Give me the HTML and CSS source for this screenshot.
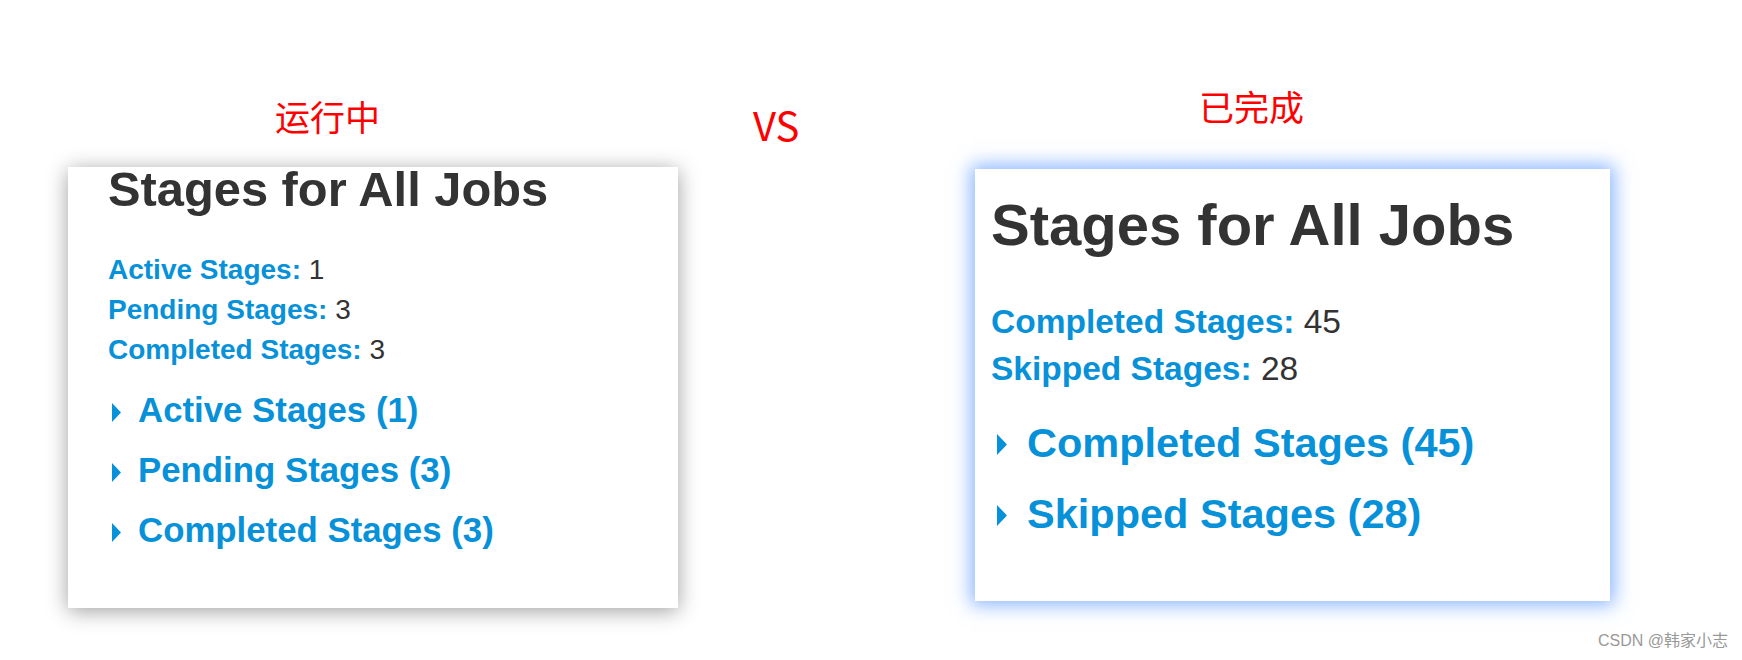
FILE: index.html
```html
<!DOCTYPE html>
<html lang="en">
<head>
    <meta charset="UTF-8">
    <title>Stages for All Jobs - 运行中 vs 已完成</title>
    <link rel="stylesheet" href="styles.css">
</head>
<body>
    <div class="page">
        <!-- 运行中 -->
        <div class="side side-running">
            <div class="label">运行中</div>
            <div class="panel panel-running">
                <h3 class="title">Stages for All Jobs</h3>
                <ul class="stats">
                    <li><a class="stat-name">Active Stages:</a> 1</li>
                    <li><a class="stat-name">Pending Stages:</a> 3</li>
                    <li><a class="stat-name">Completed Stages:</a> 3</li>
                </ul>
                <div class="sections">
                    <h4 class="section">
                        <svg class="arrow" viewBox="0 0 9 19"><polygon points="0,0 9,9.5 0,19"/></svg>
                        <a>Active Stages (1)</a>
                    </h4>
                    <h4 class="section">
                        <svg class="arrow" viewBox="0 0 9 19"><polygon points="0,0 9,9.5 0,19"/></svg>
                        <a>Pending Stages (3)</a>
                    </h4>
                    <h4 class="section">
                        <svg class="arrow" viewBox="0 0 9 19"><polygon points="0,0 9,9.5 0,19"/></svg>
                        <a>Completed Stages (3)</a>
                    </h4>
                </div>
            </div>
        </div>

        <div class="vs">VS</div>

        <!-- 已完成 -->
        <div class="side side-done">
            <div class="label">已完成</div>
            <div class="panel panel-done">
                <h3 class="title">Stages for All Jobs</h3>
                <ul class="stats">
                    <li><a class="stat-name">Completed Stages:</a> 45</li>
                    <li><a class="stat-name">Skipped Stages:</a> 28</li>
                </ul>
                <div class="sections">
                    <h4 class="section">
                        <svg class="arrow" viewBox="0 0 10 21"><polygon points="0,0 10,10.5 0,21"/></svg>
                        <a>Completed Stages (45)</a>
                    </h4>
                    <h4 class="section">
                        <svg class="arrow" viewBox="0 0 10 21"><polygon points="0,0 10,10.5 0,21"/></svg>
                        <a>Skipped Stages (28)</a>
                    </h4>
                </div>
            </div>
        </div>

        <div class="credit">CSDN @韩家小志</div>
    </div>
</body>
</html>
```

FILE: styles.css
```css
*{
    padding: 0;
    margin: 0;
}
body {
    background-color: #fff;
    font-family: "Liberation Sans", Arial, "Noto Sans CJK SC", sans-serif;
}
.page {
    position: relative;
    width: 1742px;
    height: 660px;
    overflow: hidden;
    display: flex;
    align-items: flex-start;
}
.label {
    font-family: "Noto Sans CJK SC", sans-serif;
    font-size: 35px;
    line-height: 40px;
    color: #ff0000;
}
.vs {
    box-sizing: border-box;
    width: 297px;
    padding-left: 75px;
    margin-top: 100px;
    font-family: "Noto Sans CJK SC", sans-serif;
    font-size: 40px;
    line-height: 48px;
    color: #ff0000;
}
.panel {
    background-color: #fff;
    color: #333;
}
.title {
    font-weight: bold;
    color: #333;
}
.stats {
    list-style: none;
}
.stat-name,
.section a {
    color: #0791d9;
    font-weight: bold;
}
.section {
    display: flex;
    align-items: center;
    font-weight: bold;
}
.arrow {
    fill: #0791d9;
    flex-shrink: 0;
}

/* 运行中 */
.side-running {
    width: 610px;
    margin-left: 68px;
    margin-top: 95.5px;
}
.side-running .label {
    margin-left: 207px;
    margin-bottom: 31.5px;
}
.panel-running {
    padding: 0 0 47.5px 40px;
    box-shadow: 0 3px 20px rgba(0, 0, 0, 0.38);
}
.panel-running .title {
    font-size: 48.8px;
    line-height: 44px;
}
.panel-running .stats {
    margin-top: 39px;
    font-size: 28px;
    line-height: 40px;
}
.panel-running .sections {
    margin-top: 10px;
}
.panel-running .section {
    height: 60px;
    font-size: 34.8px;
}
.panel-running .arrow {
    width: 9px;
    height: 19px;
    margin: 4px 17px 0 4px;
}

/* 已完成 */
.side-done {
    width: 635px;
    margin-top: 85.5px;
}
.side-done .label {
    margin-left: 224px;
    margin-bottom: 43.5px;
}
.panel-done {
    padding: 27px 0 52px 16px;
    box-shadow: 0 0 18px 4px rgba(85, 150, 255, 0.7);
}
.panel-done .title {
    font-size: 58px;
    line-height: 58px;
}
.panel-done .stats {
    margin-top: 44px;
    font-size: 33.5px;
    line-height: 47px;
}
.panel-done .sections {
    margin-top: 15px;
}
.panel-done .section {
    height: 71px;
    font-size: 41.5px;
}
.panel-done .arrow {
    width: 10px;
    height: 21px;
    margin: 3px 20px 0 6px;
}

.credit {
    position: absolute;
    right: 14px;
    bottom: 9px;
    font-size: 16px;
    line-height: 20px;
    color: #999;
}
```
